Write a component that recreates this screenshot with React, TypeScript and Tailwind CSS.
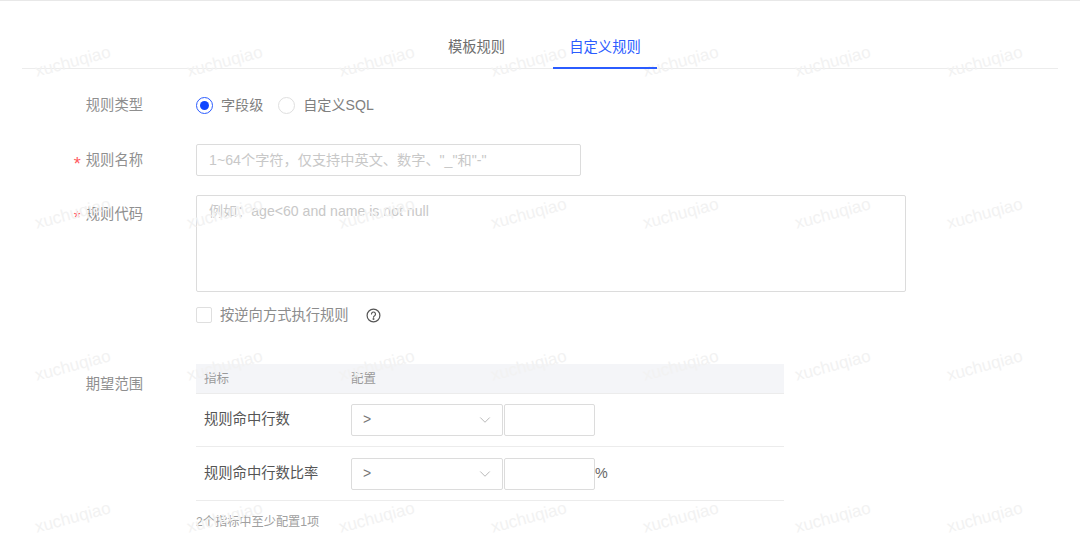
import { ChevronDown } from 'lucide-react';

const FONT = "font-['Liberation_Sans','Noto_Sans_CJK_SC',sans-serif]";

function FormLabel({ text, required, offset = '' }: { text: string; required?: boolean; offset?: string }) {
  return (
    <div className={`w-[143px] mr-[53px] flex-shrink-0 flex items-center justify-end h-8 pt-[2px] text-[14.3px] text-[#8f8f8f] ${offset}`}>
      {required && <span className="mr-[5px] text-[#ff5a5f] text-[18px] leading-none pt-[5px]">*</span>}
      <span>{text}</span>
    </div>
  );
}

function MetricRow({ name, h, suffix }: { name: string; h: string; suffix?: boolean }) {
  return (
    <div className={`flex items-center border-b border-[#ececec] ${h}`}>
      <div className="w-[155px] pl-2 text-[14.3px] text-[#555555]">{name}</div>
      <div className="flex items-center h-8 w-[152px] pl-[11px] pr-[8px] justify-between border border-[#dcdcdc] rounded-[2px] text-sm text-[#777777]">
        <span className="pb-[2px]">&gt;</span>
        <ChevronDown className="w-[18px] h-[18px] text-[#a0a0a0]" strokeWidth={1} />
      </div>
      <input className="ml-[1px] h-8 w-[91px] border border-[#dcdcdc] rounded-[2px] outline-none" />
      {suffix && <span className="text-[14.3px] text-[#666666]">%</span>}
    </div>
  );
}

export default function App() {
  return (
    <div className={`relative w-[1080px] h-[540px] overflow-hidden bg-white border-t border-[#e8e8e8] ${FONT}`}>
      {/* tabs */}
      <div className="mx-[22px] h-[68px] flex items-end border-b border-[#ececec] pl-[409px] gap-[31px]">
        <div className="h-[68px] w-[91px] pt-[37px] text-center text-[14.3px] leading-5 text-[#6e6e6e]">模板规则</div>
        <div className="relative z-10 h-[69px] -mb-px w-[104px] pt-[37px] text-center text-[14.3px] leading-5 text-[#2b5cff] border-b-2 border-[#2b5cff]">自定义规则</div>
      </div>

      {/* rule type */}
      <div className="flex mt-5">
        <FormLabel text="规则类型" />
        <div className="flex items-center h-8 pt-[1px] text-[14.1px] text-[#808080]">
          <span className="w-[17px] h-[17px] rounded-full border border-[#2b5cff] flex items-center justify-center">
            <span className="w-[9px] h-[9px] rounded-full bg-[#0f46ff]" />
          </span>
          <span className="ml-2">字段级</span>
          <span className="ml-[15px] w-[17px] h-[17px] rounded-full border border-[#dfdfdf]" />
          <span className="ml-2">自定义SQL</span>
        </div>
      </div>

      {/* rule name */}
      <div className="flex mt-[23px]">
        <FormLabel text="规则名称" required />
        <input
          className="w-[385px] h-8 px-3 border border-[#dcdcdc] rounded-[2px] text-[14.2px] outline-none placeholder:text-[#c8c8c8]"
          placeholder={'1~64个字符，仅支持中英文、数字、"_"和"-"'}
        />
      </div>

      {/* rule code */}
      <div className="flex mt-[19px]">
        <FormLabel text="规则代码" required offset="mt-[3px]" />
        <textarea
          className="w-[710px] h-[97px] px-3 py-[5px] border border-[#dcdcdc] rounded-[2px] text-[14.1px] leading-5 outline-none resize-none placeholder:text-[#c8c8c8]"
          placeholder="例如：age<60 and name is not null"
        />
      </div>

      {/* reverse */}
      <div className="flex items-center h-6 mt-[11px] ml-[196px] text-[14.3px] text-[#8c8c8c]">
        <span className="w-4 h-4 border border-[#dfdfdf] rounded-[2px]" />
        <span className="ml-2 pt-[1px]">按逆向方式执行规则</span>
        <svg className="ml-[17px]" width="15" height="15" viewBox="0 0 15 15" fill="none" stroke="#555555" strokeWidth="1.2">
          <circle cx="7.5" cy="7.5" r="6.4" />
          <path d="M5.5 6a2 2 0 1 1 3.1 1.7c-.7.4-1.1.8-1.1 1.5" strokeLinecap="round" />
          <circle cx="7.5" cy="11" r=".4" fill="#555555" />
        </svg>
      </div>

      {/* expected range */}
      <div className="flex mt-[37px]">
        <FormLabel text="期望范围" offset="mt-[4px]" />
        <div className="w-[588px]">
          <div className="flex items-center h-[30px] bg-[#f4f5f8] border-b border-[#ececec] pt-[2px] text-[12.5px] text-[#9a9a9a]">
            <div className="w-[155px] pl-2">指标</div>
            <div>配置</div>
          </div>
          <MetricRow name="规则命中行数" h="h-[53px]" />
          <MetricRow name="规则命中行数比率" h="h-[54px]" suffix />
          <div className="mt-[13px] text-[12.2px] leading-4 text-[#a0a0a0]">2个指标中至少配置1项</div>
        </div>
      </div>

      {/* watermark overlay */}
      <div className="absolute left-[-3px] top-[-15px] grid grid-cols-[repeat(7,152px)] auto-rows-[152px] pointer-events-none">
        {Array.from({ length: 28 }).map((_, i) => (
          <div key={i} className="flex items-center justify-center h-[152px]">
            <span className="-rotate-[15deg] text-[17px] text-[#f2f2f2]">xuchuqiao</span>
          </div>
        ))}
      </div>
    </div>
  );
}
